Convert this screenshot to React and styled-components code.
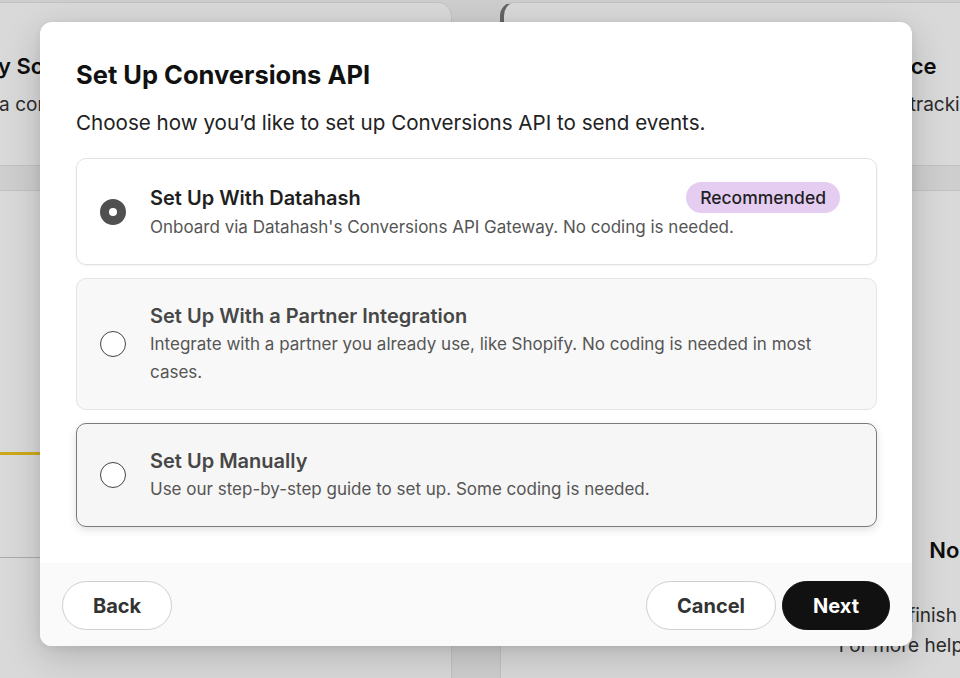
import React from 'react'
import styled, { createGlobalStyle, css } from 'styled-components'

const GlobalStyle = createGlobalStyle`
    html, body {
        margin: 0;
        padding: 0;
        overflow: hidden;
    }
    body {
        font-family: Inter, "Noto Sans", "Liberation Sans", sans-serif;
        color: #222;
        background: #ffffff;
    }
    * {
        box-sizing: border-box;
    }
`

const options = [
    {
        id: 'datahash',
        title: 'Set Up With Datahash',
        desc: "Onboard via Datahash's Conversions API Gateway. No coding is needed.",
        badge: 'Recommended',
        state: 'selected'
    },
    {
        id: 'partner',
        title: 'Set Up With a Partner Integration',
        desc: 'Integrate with a partner you already use, like Shopify. No coding is needed in most cases.',
        state: 'idle'
    },
    {
        id: 'manual',
        title: 'Set Up Manually',
        desc: 'Use our step-by-step guide to set up. Some coding is needed.',
        state: 'hover'
    }
]

function App() {
    return (
        <Page>
            <GlobalStyle />
            <Backdrop>
                <BgCard>
                    <BgTitle>Activity Score</BgTitle>
                    <BgText>Trigger a conversion event to check your setup</BgText>
                </BgCard>
                <BgCard $selected>
                    <BgTitle>Connect a Website as an Event Source</BgTitle>
                    <BgText>Install your Pinterest tag for all conversion tracking</BgText>
                </BgCard>
                <BgCard $tall>
                    <Progress />
                    <Divider />
                </BgCard>
                <BgCard $tall>
                    <EmptyState>
                        <BgTitle>No events received yet</BgTitle>
                        <BgText>
                            Once you finish setting up your Pinterest tag, events<br />
                            For more help, visit Pinterest Help Center page.
                        </BgText>
                    </EmptyState>
                </BgCard>
            </Backdrop>

            <Overlay>
                <Modal>
                    <Body>
                        <Title>Set Up Conversions API</Title>
                        <Subtitle>Choose how you’d like to set up Conversions API to send events.</Subtitle>
                        <OptionList>
                            {
                                options.map((o) => {
                                    return (
                                        <OptionCard key={o.id} $state={o.state}>
                                            <Radio $checked={o.state === 'selected'} />
                                            <OptionText>
                                                <OptionHead>
                                                    <OptionTitle $strong={o.state === 'selected'}>{o.title}</OptionTitle>
                                                    {o.badge && <Badge>{o.badge}</Badge>}
                                                </OptionHead>
                                                <OptionDesc>{o.desc}</OptionDesc>
                                            </OptionText>
                                        </OptionCard>
                                    )
                                })
                            }
                        </OptionList>
                    </Body>
                    <Footer>
                        <Button>Back</Button>
                        <Actions>
                            <Button>Cancel</Button>
                            <Button $primary>Next</Button>
                        </Actions>
                    </Footer>
                </Modal>
            </Overlay>
        </Page>
    )
}

export default App

const Page = styled.div`
    position: relative;
    width: 960px;
    height: 678px;
    overflow: hidden;
    background: #f2f2f2;
`

const Backdrop = styled.div`
    display: grid;
    grid-template-columns: 548px 560px;
    grid-auto-rows: 164px 640px;
    column-gap: 48px;
    row-gap: 24px;
    margin-left: -96px;
    padding-top: 2px;
`

const BgCard = styled.div`
    background: #ffffff;
    border: 1px solid #e4e4e4;
    border-radius: 14px;
    padding: 50px 24px 24px;
    ${p => p.$selected && css`
        border-left: 4px solid #767676;
    `}
    ${p => p.$tall && css`
        padding: 0;
    `}
`

const BgTitle = styled.div`
    font-size: 22px;
    font-weight: 600;
    color: #111;
    white-space: nowrap;
`

const BgText = styled.div`
    margin-top: 14px;
    font-size: 19px;
    color: #333;
    white-space: nowrap;
`

const Progress = styled.div`
    margin-top: 261px;
    height: 3px;
    background: #f2c61f;
`

const Divider = styled.div`
    margin-top: 102px;
    height: 1px;
    background: #c9c9c9;
`

const EmptyState = styled.div`
    margin: 346px 0 0 270px;
    width: 560px;
    text-align: center;
    ${BgText} {
        line-height: 30px;
        margin-top: 38px;
    }
`

const Overlay = styled.div`
    position: absolute;
    inset: 0;
    background: rgba(0, 0, 0, 0.15);
    display: flex;
    align-items: flex-start;
    padding: 22px 0 0 40px;
`

const Modal = styled.div`
    width: 872px;
    background: #ffffff;
    border-radius: 12px;
    box-shadow: 0 10px 36px rgba(0, 0, 0, 0.18), 0 2px 8px rgba(0, 0, 0, 0.06);
    overflow: hidden;
`

const Body = styled.div`
    padding: 37px 35px 36px 36px;
`

const Title = styled.h1`
    margin: 0;
    font-size: 25.5px;
    line-height: 32px;
    font-weight: 700;
    color: #111;
`

const Subtitle = styled.p`
    margin: 18px 0 21px;
    font-size: 20.6px;
    line-height: 28px;
    color: #222;
`

const OptionList = styled.div`
    display: flex;
    flex-direction: column;
    gap: 13px;
`

const cardStates = {
    selected: css`
        background: #ffffff;
        border-color: #e2e2e2;
        box-shadow: 0 1px 3px rgba(0, 0, 0, 0.05);
    `,
    idle: css`
        background: #f8f8f8;
        border-color: #e4e4e4;
    `,
    hover: css`
        background: #f6f6f6;
        border-color: #7a7a7a;
        box-shadow: 0 3px 8px rgba(0, 0, 0, 0.12);
    `
}

const OptionCard = styled.div`
    display: flex;
    align-items: center;
    gap: 24px;
    padding: 23px 36px 23px 23px;
    border: 1px solid;
    border-radius: 10px;
    ${p => cardStates[p.$state]}
`

const Radio = styled.span`
    flex: none;
    width: 26px;
    height: 26px;
    border-radius: 50%;
    background: #ffffff;
    border: 1.5px solid #444;
    ${p => p.$checked && css`
        border: 9px solid #505050;
    `}
`

const OptionText = styled.div`
    flex: 1;
    min-width: 0;
`

const OptionHead = styled.div`
    display: flex;
    align-items: center;
    justify-content: space-between;
    min-height: 28px;
`

const OptionTitle = styled.div`
    font-size: 20px;
    line-height: 28px;
    font-weight: 600;
    color: ${p => p.$strong ? '#1f1f1f' : '#474747'};
`

const Badge = styled.span`
    display: inline-flex;
    align-items: center;
    height: 31px;
    padding: 0 14px;
    border-radius: 16px;
    background: #e5cdf2;
    font-size: 17.5px;
    font-weight: 500;
    color: #1f1f1f;
`

const OptionDesc = styled.div`
    font-size: 17px;
    line-height: 28px;
    color: #555;
`

const Footer = styled.div`
    display: flex;
    align-items: center;
    justify-content: space-between;
    padding: 18px 22px 16px;
    background: #fafafa;
`

const Actions = styled.div`
    display: flex;
    gap: 6px;
`

const Button = styled.button`
    height: 49px;
    padding: 0 30px;
    border-radius: 25px;
    font-family: inherit;
    font-size: 20px;
    font-weight: 700;
    cursor: pointer;
    border: 1px solid ${p => p.$primary ? '#111' : '#cfcfcf'};
    background: ${p => p.$primary ? '#111' : '#fff'};
    color: ${p => p.$primary ? '#fff' : '#333'};
`
